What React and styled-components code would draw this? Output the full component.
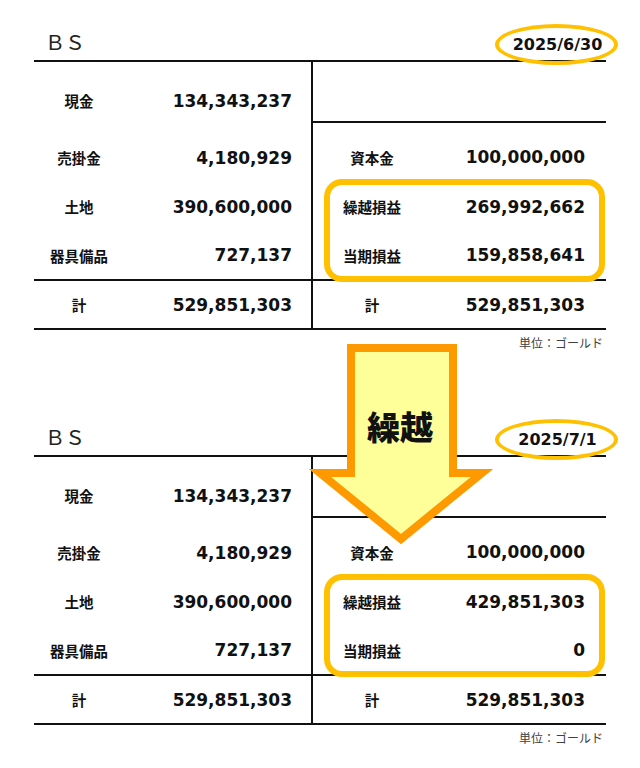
import React from 'react'
import styled, { createGlobalStyle } from 'styled-components'

const GlobalStyle = createGlobalStyle`
    body {
        margin: 0;
        background: #ffffff;
        font-family: "Noto Sans CJK JP", "Noto Sans", sans-serif;
        color: #111111;
    }
`

const Sheet = styled.div`
    position: relative;
    width: 640px;
    height: 768px;
    display: flex;
    flex-direction: column;
    gap: 44px;
`

const Block = styled.section`
    width: 572px;
    margin-left: 34px;
    display: flex;
    flex-direction: column;
`

const TitleRow = styled.div`
    height: 60px;
    display: flex;
    justify-content: space-between;
    align-items: flex-end;
`

const Title = styled.div`
    font-size: 20px;
    line-height: 20px;
    margin: 0 0 8px 11px;
    color: #222222;
`

const DateBadge = styled.div`
    position: relative;
    z-index: 1;
    box-sizing: border-box;
    width: 123px;
    height: 41px;
    margin: 0 -12px -5px 0;
    border: 4px solid #ffc000;
    border-radius: 50%;
    display: flex;
    align-items: center;
    justify-content: center;
    padding-left: 2px;
    font-family: "DejaVu Sans", sans-serif;
    font-weight: bold;
    font-size: 16px;
`

const Table = styled.div`
    display: flex;
    border-top: 2px solid #111111;
    border-bottom: 2px solid #111111;
`

const Side = styled.div`
    display: flex;
    flex-direction: column;
    width: ${(props) => props.width}px;
    border-left: ${(props) => (props.divided ? '2px solid #111111' : 'none')};
`

const Row = styled.div`
    display: flex;
    align-items: center;
    box-sizing: border-box;
    height: ${(props) => props.height}px;
    padding-top: ${(props) => props.shift || 0}px;
    border-top: ${(props) => (props.total ? '2px solid #111111' : 'none')};
`

const EmptyCell = styled.div`
    height: 59px;
    border-bottom: 2px solid #111111;
`

const Label = styled.div`
    width: ${(props) => props.width}px;
    text-align: center;
    font-weight: bold;
    font-size: 14.5px;
`

const Value = styled.div`
    flex: 1;
    text-align: right;
    padding-right: ${(props) => props.pad}px;
    font-family: "DejaVu Sans", sans-serif;
    font-weight: bold;
    font-size: 17px;
`

const Highlight = styled.div`
    position: relative;
    display: flex;
    flex-direction: column;

    &::after {
        content: "";
        position: absolute;
        top: -3px;
        bottom: -3px;
        left: 11px;
        right: 1px;
        border: 6px solid #ffc000;
        border-radius: 18px;
    }
`

const Unit = styled.div`
    margin-top: 5px;
    padding-right: 3px;
    text-align: right;
    font-size: 12px;
    line-height: 16px;
    color: #404040;
`

const ArrowWrap = styled.div`
    position: absolute;
    left: 300px;
    top: 336px;
    width: 200px;
    height: 220px;
    pointer-events: none;

    svg {
        position: absolute;
        inset: 0;
    }
`

const ArrowText = styled.div`
    position: relative;
    margin-top: 74px;
    text-align: center;
    font-weight: 900;
    font-size: 33px;
    line-height: 33px;
    color: #111111;
`

const leftRows = [
    ['現金', '134,343,237'],
    ['売掛金', '4,180,929'],
    ['土地', '390,600,000'],
    ['器具備品', '727,137'],
]

const LeftSide = () => (
    <Side width={277}>
        {leftRows.map(([label, value], i) => (
            <Row key={label} height={i === 0 ? 71 : i === 3 ? 48 : 49} shift={i === 0 ? 6 : 0}>
                <Label width={90}>{label}</Label>
                <Value pad={19}>{value}</Value>
            </Row>
        ))}
        <Row total height={49}>
            <Label width={90}>計</Label>
            <Value pad={19}>529,851,303</Value>
        </Row>
    </Side>
)

const RightSide = ({ carried, current }) => (
    <Side width={293} divided>
        <EmptyCell />
        <Row height={59} shift={9}>
            <Label width={118}>資本金</Label>
            <Value pad={21}>100,000,000</Value>
        </Row>
        <Highlight>
            <Row height={49}>
                <Label width={118}>繰越損益</Label>
                <Value pad={21}>{carried}</Value>
            </Row>
            <Row height={48}>
                <Label width={118}>当期損益</Label>
                <Value pad={21}>{current}</Value>
            </Row>
        </Highlight>
        <Row total height={49}>
            <Label width={118}>計</Label>
            <Value pad={21}>529,851,303</Value>
        </Row>
    </Side>
)

const BalanceSheet = ({ date, carried, current }) => (
    <Block>
        <TitleRow>
            <Title>ＢＳ</Title>
            <DateBadge>{date}</DateBadge>
        </TitleRow>
        <Table>
            <LeftSide />
            <RightSide carried={carried} current={current} />
        </Table>
        <Unit>単位：ゴールド</Unit>
    </Block>
)

const CarryArrow = () => (
    <ArrowWrap>
        <svg width="200" height="220" viewBox="0 0 200 220">
            <polygon
                points="51,12 153,12 153,137 182,137 101,203 20,137 51,137"
                fill="#ffff99"
                stroke="#ff9900"
                strokeWidth="8"
                strokeLinejoin="miter"
            />
        </svg>
        <ArrowText>繰越</ArrowText>
    </ArrowWrap>
)

const App = () => (
    <>
        <GlobalStyle />
        <Sheet>
            <BalanceSheet date="2025/6/30" carried="269,992,662" current="159,858,641" />
            <BalanceSheet date="2025/7/1" carried="429,851,303" current="0" />
            <CarryArrow />
        </Sheet>
    </>
)

export default App
